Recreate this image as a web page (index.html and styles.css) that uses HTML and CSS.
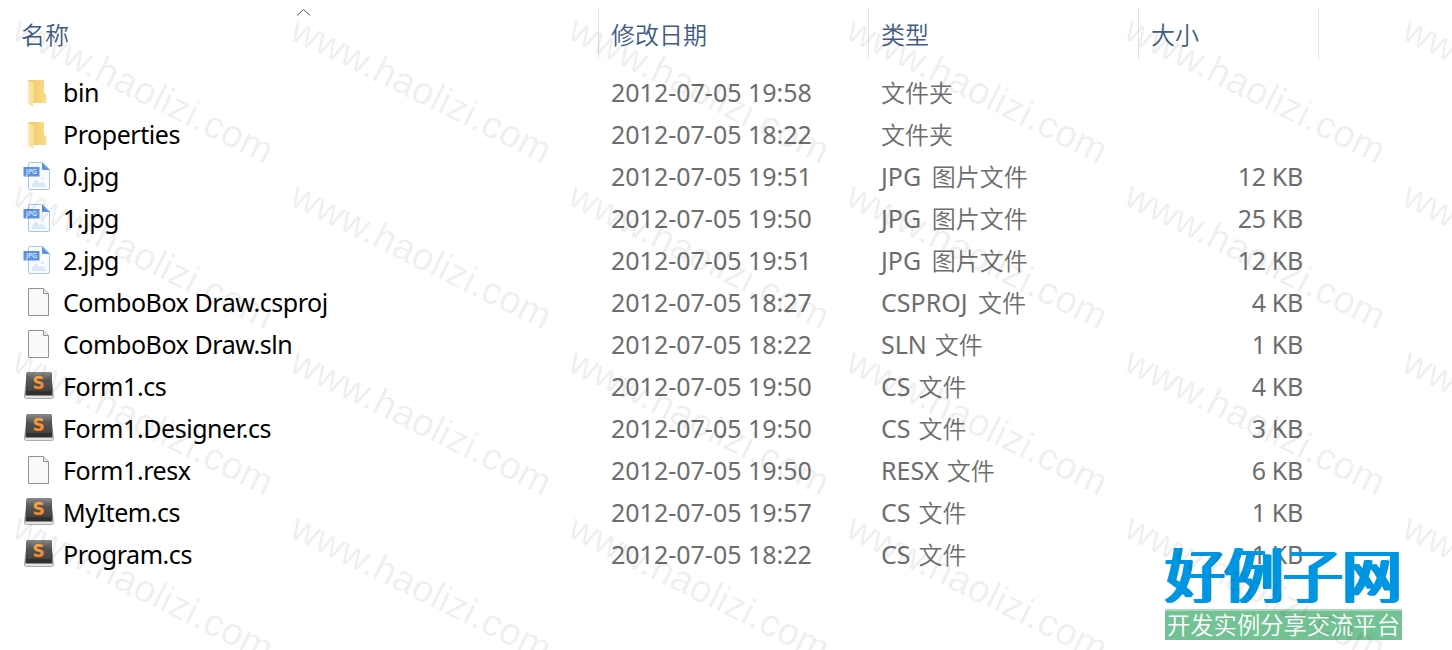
FILE: index.html
```
<!DOCTYPE html>
<html lang="zh-CN">
<head>
<meta charset="utf-8">
<title>ComboBox Draw</title>
<link rel="stylesheet" href="styles.css">
</head>
<body>
<svg class="defs" width="0" height="0">
  <defs>
    <linearGradient id="gBack" x1="0" x2="1"><stop offset="0" stop-color="#ecc766"/><stop offset="1" stop-color="#fbdc88"/></linearGradient>
    <linearGradient id="gFlap" x1="0" x2="1"><stop offset="0" stop-color="#ffe9ae"/><stop offset="1" stop-color="#fbdc90"/></linearGradient>
    <linearGradient id="gKey" x1="0" x2="0" y1="0" y2="1"><stop offset="0" stop-color="#8b8b8b"/><stop offset=".45" stop-color="#555"/><stop offset="1" stop-color="#434343"/></linearGradient>
    <linearGradient id="gS" x1="0" x2="0" y1="0" y2="1"><stop offset="0" stop-color="#ffb04d"/><stop offset="1" stop-color="#f5791c"/></linearGradient>
    <symbol id="folder" viewBox="0 0 32 32">
      <path d="M5 3H21V15.500L23.300 18V26H5z" fill="url(#gBack)"/>
      <path d="M5 3.500L10.800 6V25L10 26V30L5 26.500z" fill="url(#gFlap)"/>
    </symbol>
    <symbol id="jpg" viewBox="0 0 32 32">
      <path d="M7.500 1.500H19.500L26.500 8.500V27Q26.500 28.500 25 28.500H7Q5.500 28.500 5.500 27V3.500Q5.500 1.500 7.500 1.500z" fill="#f9fbff" stroke="#a9c4ef"/>
      <path d="M19 1.500L26.500 9H20.500Q19 9 19 7.500z" fill="#5b91df"/>
      <path d="M9 26V23L13 18.500L17 22L19 20.500L23 24V26z" fill="#dbe8fb"/><circle cx="19.500" cy="17.500" r="1.500" fill="#dbe8fb"/>
      <path d="M.5 6H16.500V15.500H.5z" fill="#5b91df"/>
      <text x="3" y="13" class="jpg-label" textLength="11" lengthAdjust="spacingAndGlyphs">JPG</text>
    </symbol>
    <symbol id="doc" viewBox="0 0 32 32">
      <path d="M5.500 1.500H20.500L25.500 6.500V28.500H5.500z" fill="#f9fafa" stroke="#929292"/>
      <path d="M20.500 1.500V6.500H25.500" fill="#e8e8e8" stroke="#929292"/>
    </symbol>
    <symbol id="sublime" viewBox="0 0 32 32">
      <path d="M4.500 1.500H27.500L30.300 24V26Q30.300 27.500 28.500 27.500H3.500Q1.500 27.500 1.500 26V24z" fill="#e4e4e4" stroke="#999" stroke-width=".8"/>
      <path d="M5 1H27Q28.500 1 28.700 3L29.400 22V24.500H2.500V22L3.500 3Q3.500 1 5 1z" fill="#303030"/>
      <path d="M5 1H27Q28.500 1 28.700 3L29.300 20H2.900L3.500 3Q3.500 1 5 1z" fill="url(#gKey)"/>
      <text x="15.700" y="17.500" class="s-label">S</text>
    </symbol>
  </defs>
</svg>
<main class="list">
  <header class="head">
    <div class="th name">名称<svg class="sort" width="15" height="9" viewBox="0 0 15 9"><path d="M1 7.500L7.500 1.500L14 7.500" fill="none" stroke="#555"/></svg></div>
    <div class="th">修改日期</div>
    <div class="th">类型</div>
    <div class="th last">大小</div>
  </header>
  <div class="row"><svg class="icon"><use href="#folder"/></svg><span class="file">bin</span><span class="cell">2012-07-05 19:58</span><span class="cell"><i>文件夹</i></span><span class="size"></span></div>
  <div class="row"><svg class="icon"><use href="#folder"/></svg><span class="file">Properties</span><span class="cell">2012-07-05 18:22</span><span class="cell"><i>文件夹</i></span><span class="size"></span></div>
  <div class="row"><svg class="icon"><use href="#jpg"/></svg><span class="file">0.jpg</span><span class="cell">2012-07-05 19:51</span><span class="cell wide">JPG <i>图片文件</i></span><span class="size">12 KB</span></div>
  <div class="row"><svg class="icon"><use href="#jpg"/></svg><span class="file">1.jpg</span><span class="cell">2012-07-05 19:50</span><span class="cell wide">JPG <i>图片文件</i></span><span class="size">25 KB</span></div>
  <div class="row"><svg class="icon"><use href="#jpg"/></svg><span class="file">2.jpg</span><span class="cell">2012-07-05 19:51</span><span class="cell wide">JPG <i>图片文件</i></span><span class="size">12 KB</span></div>
  <div class="row"><svg class="icon"><use href="#doc"/></svg><span class="file">ComboBox Draw.csproj</span><span class="cell">2012-07-05 18:27</span><span class="cell wide">CSPROJ <i>文件</i></span><span class="size">4 KB</span></div>
  <div class="row"><svg class="icon"><use href="#doc"/></svg><span class="file">ComboBox Draw.sln</span><span class="cell">2012-07-05 18:22</span><span class="cell near">SLN <i>文件</i></span><span class="size">1 KB</span></div>
  <div class="row"><svg class="icon"><use href="#sublime"/></svg><span class="file">Form1.cs</span><span class="cell">2012-07-05 19:50</span><span class="cell near">CS <i>文件</i></span><span class="size">4 KB</span></div>
  <div class="row"><svg class="icon"><use href="#sublime"/></svg><span class="file">Form1.Designer.cs</span><span class="cell">2012-07-05 19:50</span><span class="cell near">CS <i>文件</i></span><span class="size">3 KB</span></div>
  <div class="row"><svg class="icon"><use href="#doc"/></svg><span class="file">Form1.resx</span><span class="cell">2012-07-05 19:50</span><span class="cell near">RESX <i>文件</i></span><span class="size">6 KB</span></div>
  <div class="row"><svg class="icon"><use href="#sublime"/></svg><span class="file">MyItem.cs</span><span class="cell">2012-07-05 19:57</span><span class="cell near">CS <i>文件</i></span><span class="size">1 KB</span></div>
  <div class="row"><svg class="icon"><use href="#sublime"/></svg><span class="file">Program.cs</span><span class="cell">2012-07-05 18:22</span><span class="cell near">CS <i>文件</i></span><span class="size">1 KB</span></div>
</main>
<div class="brand">
  <div class="brand-name">好例子网</div>
  <div class="brand-sub">开发实例分享交流平台</div>
</div>
<svg class="watermark" width="1452" height="650" viewBox="0 0 1452 650">
  <defs>
    <text id="mark" class="mark" transform="translate(10 38) rotate(26.3)" textLength="285">www.haolizi.com</text>
    <g id="band"><use href="#mark"/><use href="#mark" x="278"/><use href="#mark" x="556"/><use href="#mark" x="834"/><use href="#mark" x="1112"/><use href="#mark" x="1390"/></g>
  </defs>
  <use href="#band"/><use href="#band" y="166"/><use href="#band" y="332"/><use href="#band" y="498"/>
</svg>
</body>
</html>
```
FILE: styles.css
```
body { margin: 0; width: 1452px; height: 650px; overflow: hidden; position: relative; background: #fff; font-family: "Noto Sans", "Noto Sans CJK SC", sans-serif; }
.defs { position: absolute; }
.list { padding-top: 8px; }
.head { display: grid; grid-template-columns: 599px 270px 270px 180px; height: 51px; margin-bottom: 13px; }
.th { box-sizing: border-box; height: 51px; border-right: 1px solid #e3e3e3; padding-left: 12px; font: 350 24px/52px "Noto Sans CJK SC", sans-serif; color: #405c82; position: relative; }
.name { padding-left: 21px; }
.sort { position: absolute; left: 296px; top: 0; }
.row { display: grid; grid-template-columns: 32px 548px 270px 270px 160px; height: 42px; padding-left: 23px; font-size: 25px; line-height: 40px; color: #6d6d6d; white-space: pre; }
.icon { width: 32px; height: 32px; display: block; margin-top: 5px; }
.file { padding-left: 8px; color: #000; letter-spacing: -.44px; }
.cell { padding-left: 8px; }
.row i { font: 350 24px/30px "Noto Sans CJK SC", sans-serif; }
.near i { margin-left: 1.5px; }
.wide i { margin-left: 4px; }
.size { text-align: right; letter-spacing: -.3px; }
.jpg-label { font: 500 6.5px "Noto Sans", sans-serif; fill: #e5efff; }
.s-label { font: 700 17px "DejaVu Sans", sans-serif; fill: url(#gS); text-anchor: middle; }
.brand { position: absolute; left: 1165px; top: 543px; width: 237px; }
.brand-name { height: 66px; font: 350 59px/60px "Noto Sans CJK SC", sans-serif; color: #0096e1; white-space: nowrap; text-shadow: 1px 0 #0096e1, -1px 0 #0096e1, 2px 0 #0096e1, -2px 0 #0096e1, 3px 0 #0096e1; }
.brand-sub { box-sizing: border-box; height: 31px; padding-left: 2px; border-top: 2px solid #a9d9bd; background: #72c294; font: 350 23.300px/27px "Noto Sans CJK SC", sans-serif; color: #fff; white-space: nowrap; }
.watermark { position: absolute; left: 0; top: 0; pointer-events: none; }
.mark { font: 38px "Liberation Sans", sans-serif; fill: rgba(0,0,0,.07); }
```
